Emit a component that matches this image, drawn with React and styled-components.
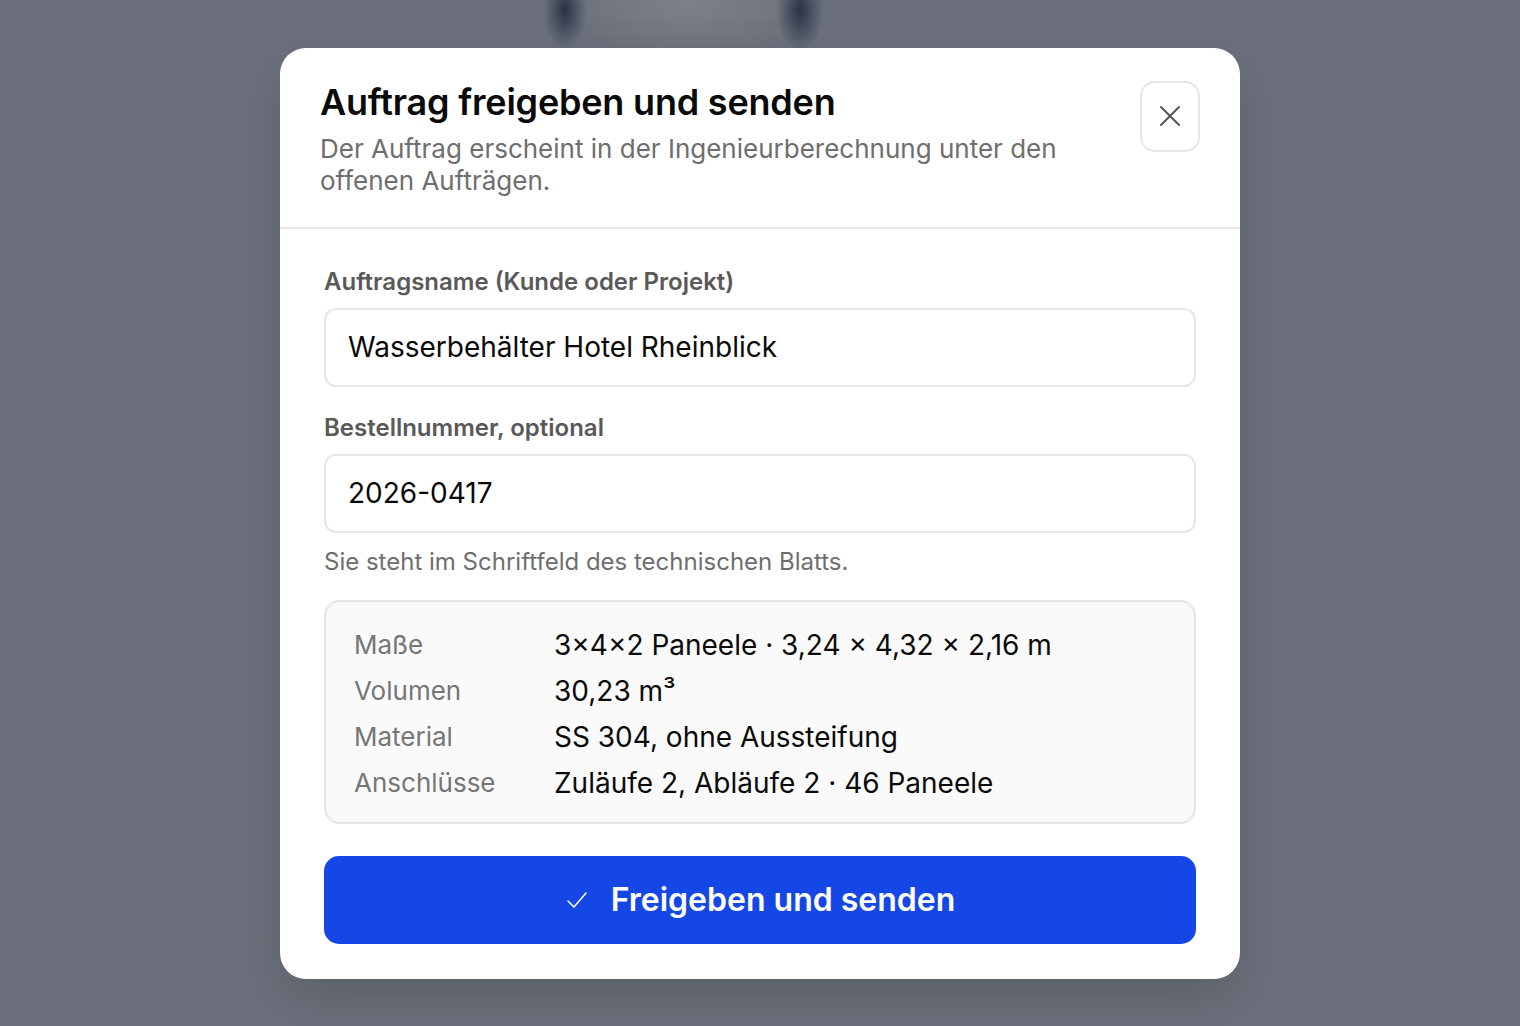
import React from 'react';
import styled, { createGlobalStyle } from 'styled-components';

const GlobalStyle = createGlobalStyle`
  html, body {
    margin: 0;
    padding: 0;
  }
  body {
    font-family: Inter, "Noto Sans", "Liberation Sans", sans-serif;
    background: #6b707c;
  }
  * {
    box-sizing: border-box;
  }
`;

const Backdrop = styled.div`
  min-height: 100vh;
  display: flex;
  align-items: center;
  justify-content: center;
  background-color: #6b707c;
  background-image:
    radial-gradient(ellipse 22px 40px at 565px 10px, rgba(38, 48, 66, 0.95), rgba(38, 48, 66, 0) 100%),
    radial-gradient(ellipse 24px 42px at 800px 10px, rgba(38, 48, 66, 0.95), rgba(38, 48, 66, 0) 100%),
    radial-gradient(ellipse 130px 60px at 690px 0px, rgba(128, 131, 136, 0.9), rgba(128, 131, 136, 0) 100%);
  background-repeat: no-repeat;
`;

const Modal = styled.div`
  width: 960px;
  background: #ffffff;
  border-radius: 26px;
  overflow: hidden;
  box-shadow: 0 20px 50px rgba(0, 0, 0, 0.15);
`;

const Header = styled.div`
  display: flex;
  align-items: flex-start;
  justify-content: space-between;
  gap: 40px;
  padding: 33px 40px 30px 40px;
  border-bottom: 2px solid #e6e6e6;
`;

const HeadText = styled.div`
  display: flex;
  flex-direction: column;
  gap: 10px;
  max-width: 760px;
`;

const Title = styled.h2`
  margin: 0;
  font-size: 36px;
  line-height: 42px;
  font-weight: 600;
  color: #0a0a0a;
  letter-spacing: -0.2px;
`;

const Subtitle = styled.p`
  margin: 0;
  font-size: 26px;
  line-height: 32px;
  font-weight: 400;
  color: #6e6e6e;
`;

const CloseButton = styled.button`
  flex: none;
  width: 60px;
  height: 71px;
  margin-top: 0;
  border: 2px solid #e6e6e6;
  border-radius: 15px;
  background: #ffffff;
  display: flex;
  align-items: center;
  justify-content: center;
  color: #555555;
  cursor: pointer;
  padding: 0;
`;

const Body = styled.div`
  display: flex;
  flex-direction: column;
  padding: 38px 44px 35px 44px;
`;

const Field = styled.div`
  display: flex;
  flex-direction: column;
  gap: 12px;
  margin-bottom: ${(p) => p.$mb || 0}px;
`;

const Label = styled.label`
  font-size: 24px;
  line-height: 29px;
  font-weight: 600;
  color: #595959;
`;

const Input = styled.input`
  width: 100%;
  height: 79px;
  border: 2px solid #e6e6e6;
  border-radius: 12px;
  padding: 0 22px;
  font-family: Inter, "Noto Sans", "Liberation Sans", sans-serif;
  font-size: 28px;
  color: #0a0a0a;
  background: #ffffff;
  outline: none;
`;

const Hint = styled.p`
  margin: 14px 0 24px 0;
  font-size: 24px;
  line-height: 29px;
  color: #6e6e6e;
`;

const Summary = styled.dl`
  margin: 0 0 32px 0;
  display: grid;
  grid-template-columns: 200px 1fr;
  row-gap: 12px;
  padding: 26px 28px 22px 28px;
  background: #fafafa;
  border: 2px solid #e6e6e6;
  border-radius: 16px;
`;

const Term = styled.dt`
  font-size: 26px;
  line-height: 34px;
  color: #767676;
`;

const Value = styled.dd`
  margin: 0;
  font-size: 28px;
  line-height: 34px;
  color: #0a0a0a;
`;

const SubmitButton = styled.button`
  width: 100%;
  height: 88px;
  border: none;
  border-radius: 15px;
  background: #1447e6;
  color: #ffffff;
  display: flex;
  align-items: center;
  justify-content: center;
  gap: 22px;
  font-family: Inter, "Noto Sans", "Liberation Sans", sans-serif;
  font-size: 32px;
  font-weight: 600;
  cursor: pointer;
`;

const rows = [
  ['Maße', '3×4×2 Paneele · 3,24 × 4,32 × 2,16 m'],
  ['Volumen', '30,23 m³'],
  ['Material', 'SS 304, ohne Aussteifung'],
  ['Anschlüsse', 'Zuläufe 2, Abläufe 2 · 46 Paneele'],
];

export default function App() {
  return (
    <>
      <GlobalStyle />
      <Backdrop>
        <Modal>
          <Header>
            <HeadText>
              <Title>Auftrag freigeben und senden</Title>
              <Subtitle>
                Der Auftrag erscheint in der Ingenieurberechnung unter den offenen Aufträgen.
              </Subtitle>
            </HeadText>
            <CloseButton aria-label="Schließen">
              <svg width="24" height="24" viewBox="0 0 24 24" fill="none" stroke="currentColor" strokeWidth="2" strokeLinecap="round">
                <path d="M3 3L21 21M21 3L3 21" />
              </svg>
            </CloseButton>
          </Header>
          <Body>
            <Field $mb={26}>
              <Label>Auftragsname (Kunde oder Projekt)</Label>
              <Input defaultValue="Wasserbehälter Hotel Rheinblick" />
            </Field>
            <Field>
              <Label>Bestellnummer, optional</Label>
              <Input defaultValue="2026-0417" />
            </Field>
            <Hint>Sie steht im Schriftfeld des technischen Blatts.</Hint>
            <Summary>
              {rows.map(([k, v]) => (
                <React.Fragment key={k}>
                  <Term>{k}</Term>
                  <Value>{v}</Value>
                </React.Fragment>
              ))}
            </Summary>
            <SubmitButton>
              <svg width="24" height="24" viewBox="0 0 24 24" fill="none" stroke="currentColor" strokeWidth="1.6" strokeLinecap="round" strokeLinejoin="round">
                <path d="M3 13L9 19L21 5" />
              </svg>
              Freigeben und senden
            </SubmitButton>
          </Body>
        </Modal>
      </Backdrop>
    </>
  );
}
